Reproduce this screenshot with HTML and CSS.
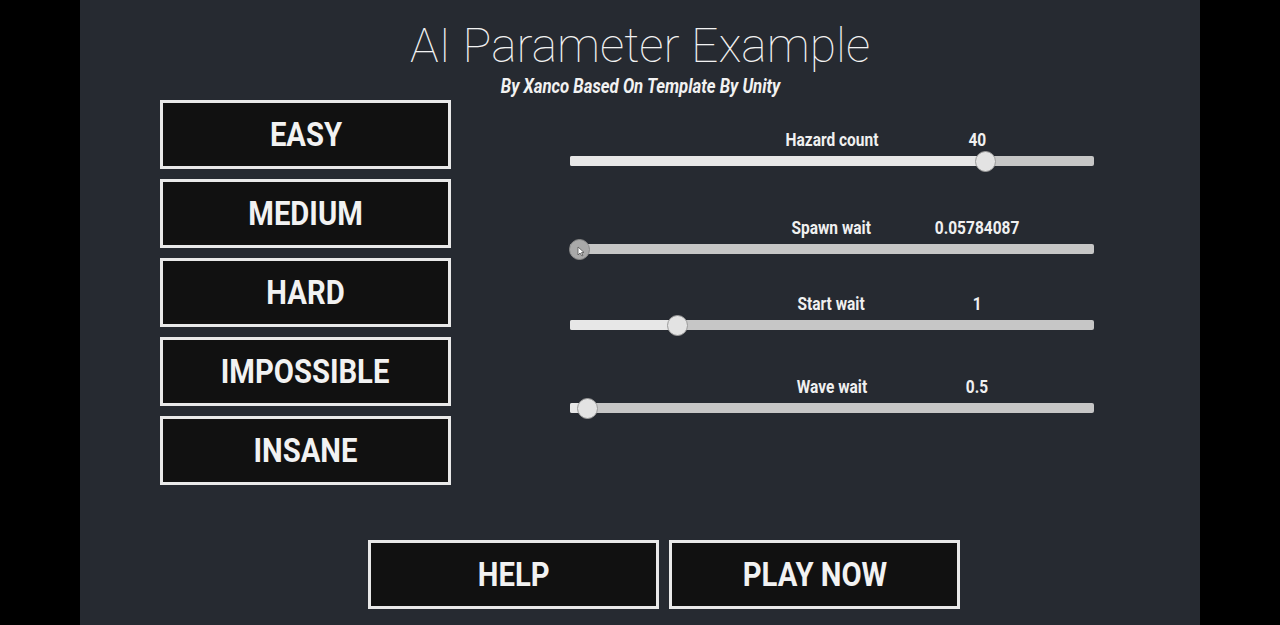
FILE: index.html
```html
<!DOCTYPE html>
<html lang="en">
<head>
  <meta charset="UTF-8" />
  <meta name="viewport" content="width=device-width, initial-scale=1.0" />
  <title>AI Parameter Example</title>
  <link rel="stylesheet" href="styles.css">
</head>
<body>
<div class="stage">
  <div class="header">
    <h1>AI Parameter Example</h1>
    <p class="credit"><span class="narrow">By Xanco Based On Template By Unity</span></p>
  </div>

  <div class="main">
    <div class="levels">
      <button class="btn"><span class="narrow">EASY</span></button>
      <button class="btn"><span class="narrow">MEDIUM</span></button>
      <button class="btn"><span class="narrow">HARD</span></button>
      <button class="btn"><span class="narrow">IMPOSSIBLE</span></button>
      <button class="btn"><span class="narrow">INSANE</span></button>
    </div>

    <div class="params">
      <div class="param param-first">
        <div class="param-head">
          <span class="param-name"><span class="narrow">Hazard count</span></span>
          <span class="param-value"><span class="narrow">40</span></span>
        </div>
        <div class="track">
          <div class="fill" style="width: 415px"></div>
          <div class="knob" style="left: 415px"></div>
        </div>
      </div>

      <div class="param param-second">
        <div class="param-head">
          <span class="param-name"><span class="narrow">Spawn wait</span></span>
          <span class="param-value"><span class="narrow">0.05784087</span></span>
        </div>
        <div class="track">
          <div class="fill" style="width: 9px"></div>
          <div class="knob knob-held" style="left: 9px">
            <svg class="cursor" width="8" height="11" viewBox="0 0 8 11"><path d="M1 1 L1 9 L3 7 L5 10 L6 9.4 L4.4 6.6 L7 6.4 Z" fill="#fff" stroke="#555" stroke-width="0.8"/></svg>
          </div>
        </div>
      </div>

      <div class="param param-third">
        <div class="param-head">
          <span class="param-name"><span class="narrow">Start wait</span></span>
          <span class="param-value"><span class="narrow">1</span></span>
        </div>
        <div class="track">
          <div class="fill" style="width: 107px"></div>
          <div class="knob" style="left: 107px"></div>
        </div>
      </div>

      <div class="param param-fourth">
        <div class="param-head">
          <span class="param-name"><span class="narrow">Wave wait</span></span>
          <span class="param-value"><span class="narrow">0.5</span></span>
        </div>
        <div class="track">
          <div class="fill" style="width: 17px"></div>
          <div class="knob" style="left: 17px"></div>
        </div>
      </div>
    </div>
  </div>

  <div class="footer">
    <button class="btn"><span class="narrow">HELP</span></button>
    <button class="btn"><span class="narrow">PLAY NOW</span></button>
  </div>
</div>
</body>
</html>
```

FILE: styles.css
```css
html, body {
  margin: 0;
  height: 100%;
  background: #000;
}
body {
  font-family: "Roboto", "Liberation Sans", sans-serif;
  overflow: hidden;
}
.stage {
  width: 1120px;
  height: 625px;
  margin: 0 auto;
  background: #262a31;
  color: #f0f0f0;
}
/* condensed look: no condensed face installed, so squeeze the bold one */
.narrow {
  display: inline-block;
  transform: scaleX(0.86);
  white-space: nowrap;
}
.header {
  text-align: center;
  padding-top: 18px;
}
h1 {
  margin: 0;
  font-weight: 100;
  font-size: 48px;
  line-height: 56px;
  color: #f2f2f2;
}
.credit {
  margin: 3px 0 0;
  font-size: 19.5px;
  font-weight: bold;
  font-style: italic;
  line-height: 20px;
  color: #f2f2f2;
}
.main {
  display: flex;
  margin-top: 3px;
}
.levels {
  display: flex;
  flex-direction: column;
  gap: 10px;
  margin-left: 80px;
  width: 291px;
}
.btn {
  height: 69px;
  background: #111;
  border: 3px solid #e9e9e9;
  color: #f2f2f2;
  font-family: inherit;
  font-weight: bold;
  font-size: 34px;
  padding: 0 0 2px;
  cursor: pointer;
}
.params {
  margin-left: 119px;
  width: 524px;
}
.param-first { margin-top: 30px; }
.param-second { margin-top: 52px; }
.param-third { margin-top: 40px; }
.param-fourth { margin-top: 47px; }
.param-head {
  display: grid;
  grid-template-columns: 181px 161px 130px 1fr;
  font-size: 18px;
  font-weight: bold;
  line-height: 20px;
  height: 20px;
}
.param-name {
  grid-column: 2;
  text-align: center;
}
.param-value {
  grid-column: 3;
  text-align: center;
}
.track {
  position: relative;
  height: 10px;
  margin-top: 6px;
  background: #c6c6c6;
  border-radius: 2px;
}
.fill {
  height: 100%;
  background: #e7e7e7;
  border-radius: 2px;
}
.knob {
  position: absolute;
  top: 50%;
  width: 19px;
  height: 19px;
  margin: -10px 0 0 -10px;
  border-radius: 50%;
  background: #e3e3e3;
  border: 1px solid #9a9a9a;
}
.knob-held {
  background: #a9a9a9;
  border-color: #888;
}
.cursor {
  position: absolute;
  left: 7px;
  top: 6px;
}
.footer {
  display: flex;
  gap: 10px;
  margin: 55px 0 0 288px;
}
.footer .btn {
  width: 291px;
}
```
